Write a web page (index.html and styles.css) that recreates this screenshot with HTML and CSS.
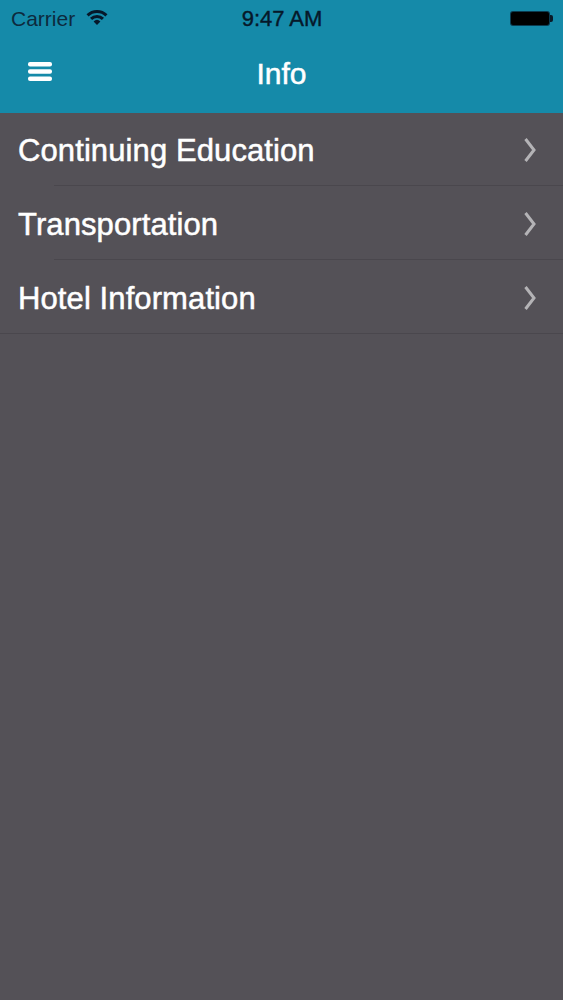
FILE: index.html
```html
<!DOCTYPE html>
<html lang="en">
<head>
    <meta charset="UTF-8">
    <meta name="viewport" content="width=device-width, initial-scale=1.0">
    <title>Info</title>
    <link rel="stylesheet" href="styles.css">
</head>
<body>
    <header class="topbar">
        <div class="status">
            <div class="status-left">
                <span class="carrier">Carrier</span>
                <svg class="wifi" width="22" height="16" viewBox="0 0 22 16">
                    <path d="M0.5 5.2 A15 15 0 0 1 21.5 5.2 L19.4 7.4 A12 12 0 0 0 2.6 7.4 Z" fill="#06182a"/>
                    <path d="M4 8.8 A10 10 0 0 1 18 8.8 L15.9 11 A7 7 0 0 0 6.1 11 Z" fill="#06182a"/>
                    <path d="M7.6 12.4 A5 5 0 0 1 14.4 12.4 L11 16 Z" fill="#06182a"/>
                </svg>
            </div>
            <span class="time">9:47 AM</span>
            <div class="battery"><div class="battery-fill"></div></div>
        </div>
        <div class="navbar">
            <svg class="menu" width="26" height="21" viewBox="0 0 26 21">
                <rect x="1" y="1" width="24" height="4.6" rx="2" fill="#fff"/>
                <rect x="1" y="8.2" width="24" height="4.6" rx="2" fill="#fff"/>
                <rect x="1" y="15.4" width="24" height="4.6" rx="2" fill="#fff"/>
            </svg>
            <h1 class="title">Info</h1>
        </div>
    </header>

    <ul class="list">
        <li class="row">
            <span class="label">Continuing Education</span>
            <svg class="chevron" width="14" height="26" viewBox="0 0 14 26"><path d="M2.5 2 L11 13 L2.5 24" fill="none" stroke="#b4b3b6" stroke-width="3"/></svg>
        </li>
        <li class="row">
            <span class="label">Transportation</span>
            <svg class="chevron" width="14" height="26" viewBox="0 0 14 26"><path d="M2.5 2 L11 13 L2.5 24" fill="none" stroke="#b4b3b6" stroke-width="3"/></svg>
        </li>
        <li class="row">
            <span class="label">Hotel Information</span>
            <svg class="chevron" width="14" height="26" viewBox="0 0 14 26"><path d="M2.5 2 L11 13 L2.5 24" fill="none" stroke="#b4b3b6" stroke-width="3"/></svg>
        </li>
    </ul>
</body>
</html>
```

FILE: styles.css
```css
html, body {
    height: 100%;
}

body {
    margin: 0;
    background: #545157;
    color: white;
    font-family: "Liberation Sans", Arial, sans-serif;
}

.topbar {
    height: 113px;
    margin-bottom: -1px;
    background: #158aa9;
}

.status {
    height: 37px;
    padding: 0 10px 0 11px;
    display: grid;
    grid-template-columns: 1fr auto 1fr;
    align-items: center;
    color: #06182a;
    font-size: 21px;
}

.status-left {
    display: flex;
    align-items: center;
    gap: 11px;
}

.carrier {
    color: #0d2a3e;
}

.wifi {
    margin-top: -3px;
}

.time {
    font-size: 22px;
    -webkit-text-stroke: 0.4px #06182a;
}

.battery {
    justify-self: end;
    width: 43px;
    height: 15px;
    padding: 1px 4px 1px 1px;
    box-sizing: border-box;
    position: relative;
}

.battery-fill {
    height: 100%;
    background: #000;
    border-radius: 2px;
    box-shadow: 0 0 0 1px #0b3b50;
}

.battery::after {
    content: "";
    position: absolute;
    right: 0;
    top: 4px;
    width: 3px;
    height: 7px;
    background: #0a1a28;
    border-radius: 0 2px 2px 0;
}

.navbar {
    height: 74px;
    position: relative;
    display: flex;
    align-items: center;
    justify-content: center;
}

.menu {
    position: absolute;
    left: 27px;
    top: 24px;
}

.title {
    margin: 0;
    font-size: 30px;
    font-weight: normal;
    -webkit-text-stroke: 0.5px white;
}

.list {
    margin: 0;
    padding: 0;
    list-style: none;
}

.row {
    height: 73px;
    padding: 0 26px 0 18px;
    display: flex;
    align-items: center;
    justify-content: space-between;
    position: relative;
}

.row + .row {
    margin-top: 1px;
}

.row::after {
    content: "";
    position: absolute;
    left: 54px;
    right: 0;
    bottom: -1px;
    height: 1px;
    background: #4a474d;
}

.row:last-child::after {
    left: 0;
}

.label {
    padding-top: 5px;
    font-size: 31px;
    letter-spacing: 0.1px;
    -webkit-text-stroke: 0.5px white;
}

.chevron {
    margin-top: 2px;
}
```
